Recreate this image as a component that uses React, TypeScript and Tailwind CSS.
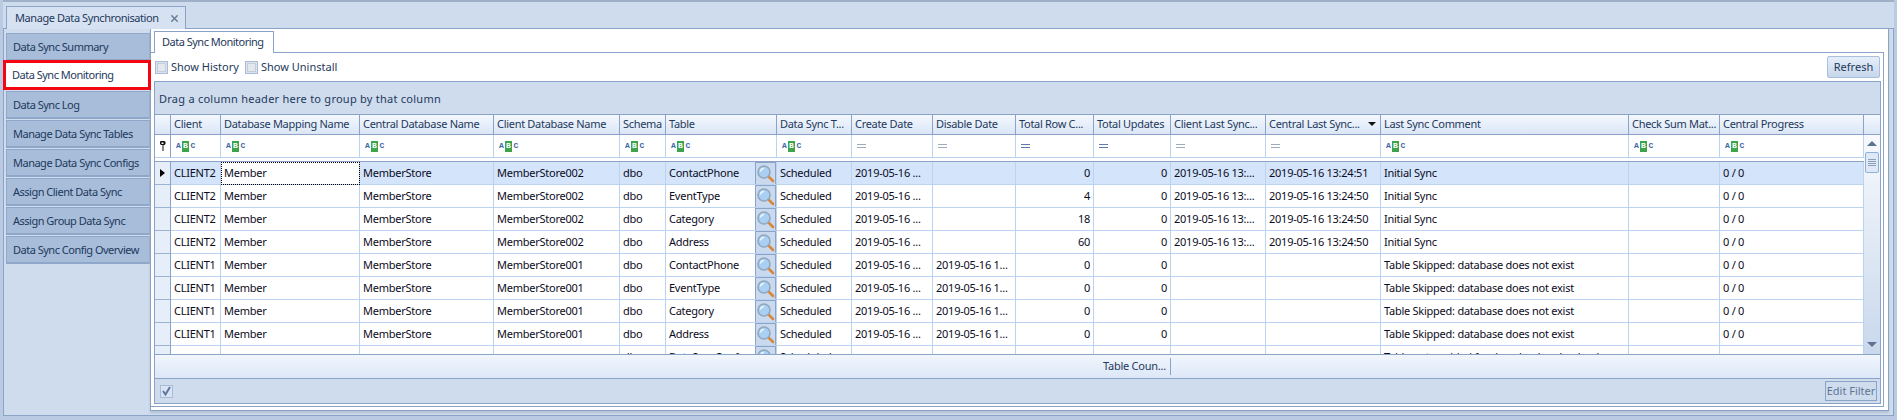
import { X } from "lucide-react";

const gridCols = "grid grid-cols-[16px_50px_139px_134px_126px_46px_111px_75px_81px_83px_78px_77px_95px_115px_248px_91px_144px]";

const sideItems = [
    "Data Sync Summary",
    "Data Sync Monitoring",
    "Data Sync Log",
    "Manage Data Sync Tables",
    "Manage Data Sync Configs",
    "Assign Client Data Sync",
    "Assign Group Data Sync",
    "Data Sync Config Overview",
];

const headers = [
    "Client", "Database Mapping Name", "Central Database Name", "Client Database Name", "Schema", "Table",
    "Data Sync T...", "Create Date", "Disable Date", "Total Row C...", "Total Updates", "Client Last Sync...",
    "Central Last Sync...", "Last Sync Comment", "Check Sum Mat...", "Central Progress",
];

const filters = ["abc", "abc", "abc", "abc", "abc", "abc", "abc", "gray", "gray", "blue", "blue", "gray", "gray", "abc", "abc", "abc"];

type Row = string[];

const mk = (client: string, db: string, table: string, disable: string, count: string, clientSync: string, centralSync: string, comment: string): Row => [
    client, client ? "Member" : "", client ? "MemberStore" : "", db, "dbo", table, "Scheduled",
    client ? "2019-05-16 ..." : "", disable, client ? count : "", client ? "0" : "", clientSync, centralSync, comment, "", client ? "0 / 0" : "",
];

const skipped = "Table Skipped: database does not exist";
const rows: Row[] = [
    mk("CLIENT2", "MemberStore002", "ContactPhone", "", "0", "2019-05-16 13:...", "2019-05-16 13:24:51", "Initial Sync"),
    mk("CLIENT2", "MemberStore002", "EventType", "", "4", "2019-05-16 13:...", "2019-05-16 13:24:50", "Initial Sync"),
    mk("CLIENT2", "MemberStore002", "Category", "", "18", "2019-05-16 13:...", "2019-05-16 13:24:50", "Initial Sync"),
    mk("CLIENT2", "MemberStore002", "Address", "", "60", "2019-05-16 13:...", "2019-05-16 13:24:50", "Initial Sync"),
    mk("CLIENT1", "MemberStore001", "ContactPhone", "2019-05-16 1...", "0", "", "", skipped),
    mk("CLIENT1", "MemberStore001", "EventType", "2019-05-16 1...", "0", "", "", skipped),
    mk("CLIENT1", "MemberStore001", "Category", "2019-05-16 1...", "0", "", "", skipped),
    mk("CLIENT1", "MemberStore001", "Address", "2019-05-16 1...", "0", "", "", skipped),
    mk("", "", "DataSyncConf", "", "", "", "", "Table not enabled for download and upload"),
];

const Magnifier = () => (
    <svg width="19" height="19" viewBox="0 0 19 19">
        <line x1="12" y1="12" x2="17" y2="17" stroke="#d8873a" strokeWidth="2.600" strokeLinecap="round" />
        <circle cx="8" cy="8" r="6" fill="#a9d0f2" stroke="#93a7bd" strokeWidth="1.600" />
        <path d="M4.500 7.500a3.500 3.500 0 0 1 3.500-3" fill="none" stroke="#eef7ff" strokeWidth="1.400" />
    </svg>
);

const Pin = () => (
    <svg width="7" height="10" viewBox="0 0 7 10">
        <path d="M1.500 0h4l1 1v2l-1 1h-1v6h-1v-6h-1.500l-1-1v-2zM2.500 1.500v1.500h2v-1.500z" fillRule="evenodd" fill="#111" />
    </svg>
);

const AbcIcon = () => (
    <span className="flex items-center h-[11px] font-['Liberation_Mono',monospace] text-[8px] font-bold leading-none tracking-normal text-[#3f66a5]">
        <span className="w-[5px] mr-[1px] text-center">A</span>
        <span className="w-[7px] h-[11px] bg-[#3fa34d] text-white flex items-center justify-center">B</span>
        <span className="w-[6px] ml-[1px] text-center">C</span>
    </span>
);

const EqIcon = ({ blue }: { blue: boolean }) => (
    <span className={`block w-[9px] h-[4px] border-y ${blue ? "border-[#5f7bad]" : "border-[#9fabbc]"}`} />
);

const SmallBox = ({ checked }: { checked?: boolean }) => (
    <span className="w-[13px] h-[13px] border border-[#a9bbd6] bg-[#d9e3f1] flex items-center justify-center">
        {checked
            ? <svg width="11" height="11" viewBox="0 0 11 11"><path d="M2 5l2.500 3.500L9 1" fill="none" stroke="#5a77a3" strokeWidth="2" /></svg>
            : <span className="block w-[9px] h-[9px] bg-[#e3e8ef] border border-[#c6cdd8]" />}
    </span>
);

const ScrollBar = () => (
    <div className="w-[16px] flex flex-col items-center bg-gradient-to-b from-[#f7f9fd] to-[#c9d8ec]">
        <div className="h-[17px] flex items-center justify-center">
            <span className="w-0 h-0 border-x-[5px] border-x-transparent border-b-[5px] border-b-[#5b7192]" />
        </div>
        <div className="w-[14px] h-[21px] rounded-[2px] border border-[#8fb0d8] bg-[#dfe9f6] flex flex-col items-center justify-center gap-[1px]">
            <span className="block w-[8px] h-px bg-[#8ca0bb]" />
            <span className="block w-[8px] h-px bg-[#8ca0bb]" />
            <span className="block w-[8px] h-px bg-[#8ca0bb]" />
            <span className="block w-[8px] h-px bg-[#8ca0bb]" />
        </div>
        <div className="flex-1" />
        <div className="h-[16px] pb-[4px] flex items-center justify-center">
            <span className="w-0 h-0 border-x-[5px] border-x-transparent border-t-[5px] border-t-[#5b7192]" />
        </div>
    </div>
);

const DataRow = ({ row, index }: { row: Row; index: number }) => {
    const selected = index == 0;
    return (
        <div className={`${gridCols} h-[23px] shrink-0 text-[#0b0b22] tracking-[-0.25px] ${selected ? "bg-[#d3e4fb]" : "bg-white"}`}>
            <div className="border-r border-r-[#8ba3c7] border-b border-b-[#9db3d2] bg-[#e6eefa] flex items-center justify-center">
                {selected && <span className="w-0 h-0 border-y-[4px] border-y-transparent border-l-[5px] border-l-black" />}
            </div>
            {row.map((value, col) => {
                const numeric = col == 9 || col == 10;
                const focused = selected && col == 1;
                return (
                    <div
                        key={col}
                        className={`relative flex items-center pt-px whitespace-nowrap overflow-hidden border-r border-b border-[#bcd3f0] ${numeric ? "justify-end pr-[3px]" : "pl-[3px]"} ${focused ? "bg-white outline-1 -outline-offset-1 outline-dotted outline-black" : ""}`}
                    >
                        {value}
                        {col == 5 && (
                            <span className="absolute right-0 top-0 w-[21px] h-[23px] bg-[#c9d9ee] border border-[#8ba3c7] flex items-center justify-center">
                                <Magnifier />
                            </span>
                        )}
                    </div>
                );
            })}
        </div>
    );
};

export default function App() {
    return (
        <div className="w-[1897px] h-[420px] overflow-hidden flex flex-col bg-[#cfdcee] border-x-[3px] border-x-[#b9cae2] font-['Noto_Sans',sans-serif] text-[11px] text-[#1e395b]">
            <div className="h-[2px] bg-[#9fb0c8] shrink-0" />

            <div className="h-[26px] shrink-0 pl-[3px] pt-[4px]">
                <div className="relative z-10 w-[180px] h-[23px] border border-b-0 border-[#8ba3c7] bg-[#d6e2f2] flex items-center pl-[8px] whitespace-nowrap tracking-[-0.42px]">
                    <span className="text-[#1e395b]">Manage Data Synchronisation</span>
                    <X size={11} strokeWidth={3.500} className="absolute right-[5px] top-[6px] text-[#6f829c]" />
                </div>
            </div>

            <div className="h-[388px] shrink-0 border border-[#8ba3c7] flex pl-[2px] bg-[#cfdcee]">
                <div className="w-[144px] shrink-0 pt-[4px] flex flex-col gap-[1px] whitespace-nowrap tracking-[-0.5px]">
                    {sideItems.map((item, i) =>
                        i == 1 ? (
                            <div key={item} className="relative z-10 -ml-[3px] -mt-[2px] w-[148px] h-[30px] border-[3px] border-[#f40612] bg-white flex items-center pl-[6px]">
                                {item}
                            </div>
                        ) : (
                            <div key={item} className="h-[28px] border border-[#8fa7c8] border-b-2 bg-[#a7bdda] flex items-center pl-[6px] pt-[1px]">
                                {item}
                            </div>
                        )
                    )}
                </div>

                <div className="w-[739px] grow h-[382px] border-x border-b border-[#8ba3c7] bg-white mr-[4px] flex flex-col shadow-[0_2px_2px_#b4c2d6]">
                    <div className="h-[23px] shrink-0 pl-[3px] pt-[2px]">
                        <div className="relative z-10 w-[120px] h-[22px] border border-b-0 border-[#8ba3c7] bg-white flex items-center pl-[7px] whitespace-nowrap tracking-[-0.5px]">
                            Data Sync Monitoring
                        </div>
                    </div>

                    <div className="h-[355px] mr-[4px] border-t border-r border-b border-[#8ba3c7] pl-[3px] pr-[2px] flex flex-col">
                        <div className="h-[28px] shrink-0 flex items-center pl-[1px] pr-px">
                            <div className="flex items-center gap-[3px] w-[90px]">
                                <SmallBox />
                                <span>Show History</span>
                            </div>
                            <div className="flex items-center gap-[3px]">
                                <SmallBox />
                                <span>Show Uninstall</span>
                            </div>
                            <button className="ml-auto w-[53px] h-[22px] rounded-[2px] border border-[#a9bfdc] bg-gradient-to-b from-[#e6eef9] to-[#c7d7ec] text-[#1e395b]">
                                Refresh
                            </button>
                        </div>

                        <div className="h-[323px] border border-[#8ba3c7] flex flex-col overflow-hidden">
                            <div className="h-[33px] shrink-0 bg-[#cfdcee] border-b border-[#8ba3c7] flex items-center pl-[4px] pt-[2px] tracking-[0.25px]">
                                Drag a column header here to group by that column
                            </div>

                            <div className="h-[20px] shrink-0 flex border-b border-[#8ba3c7] bg-gradient-to-b from-[#f4f8fe] to-[#dbe6f6] tracking-[-0.3px]">
                                <div className={gridCols}>
                                    <div className="border-r border-[#8ba3c7]" />
                                    {headers.map((h, i) => (
                                        <div key={h} className="relative flex items-center whitespace-nowrap overflow-hidden border-r border-[#8ba3c7] pl-[3px]">
                                            {h}
                                            {i == 12 && (
                                                <span className="absolute right-[4px] top-[7px] w-0 h-0 border-x-[4px] border-x-transparent border-t-[4px] border-t-[#111]" />
                                            )}
                                        </div>
                                    ))}
                                </div>
                                <div className="w-[16px]" />
                            </div>

                            <div className="h-[219px] shrink-0 flex">
                                <div className="w-[1709px] shrink-0 flex flex-col overflow-hidden">
                                    <div className={`${gridCols} h-[23px] shrink-0 bg-white`}>
                                        <div className="border-r border-r-[#8ba3c7] border-b border-b-[#bcd3f0] flex items-center justify-center">
                                            <Pin />
                                        </div>
                                        {filters.map((f, i) => (
                                            <div key={i} className="flex items-center border-r border-b border-[#bcd3f0] pl-[5px]">
                                                {f == "abc" ? <AbcIcon /> : <EqIcon blue={f == "blue"} />}
                                            </div>
                                        ))}
                                    </div>
                                    <div className="h-[4px] shrink-0 bg-white border-b border-[#8ba3c7]" />
                                    {rows.map((row, i) => (
                                        <DataRow key={i} row={row} index={i} />
                                    ))}
                                </div>
                                <ScrollBar />
                            </div>

                            <div className="h-[25px] shrink-0 border-y border-[#8ba3c7] bg-gradient-to-b from-[#f2f6fd] to-[#dce7f7] flex items-center pl-[948px] tracking-[-0.25px]">
                                <span className="w-[68px] h-[17px] border-r border-[#8ba3c7] flex items-center whitespace-nowrap">Table Coun...</span>
                            </div>

                            <div className="h-[24px] shrink-0 bg-[#cfdcee] flex items-center pl-[5px] pr-[3px]">
                                <SmallBox checked />
                                <button className="ml-auto w-[52px] h-[20px] border border-[#8ba3c7] text-[#5f7594] whitespace-nowrap">
                                    Edit Filter
                                </button>
                            </div>
                        </div>
                    </div>
                </div>
            </div>

            <div className="flex-1 bg-[#b9cae2]" />
        </div>
    );
}
